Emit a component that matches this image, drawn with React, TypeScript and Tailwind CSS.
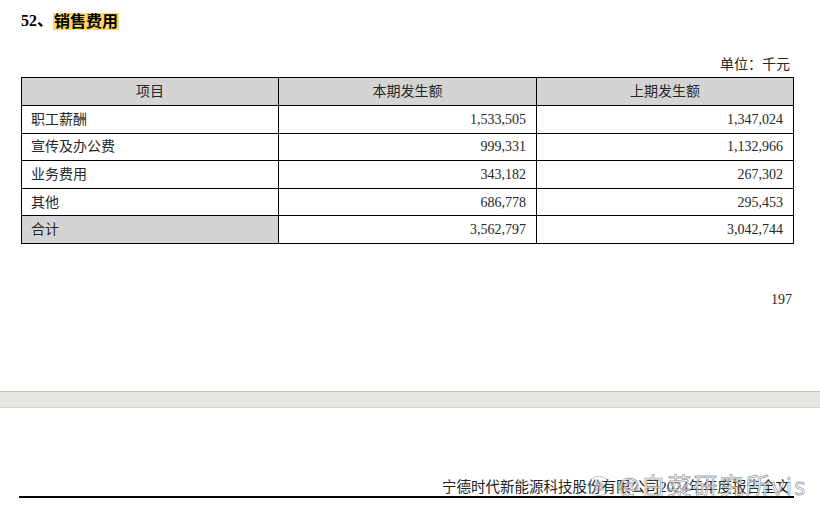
const rows = [
  { name: "职工薪酬", cur: "1,533,505", prev: "1,347,024" },
  { name: "宣传及办公费", cur: "999,331", prev: "1,132,966" },
  { name: "业务费用", cur: "343,182", prev: "267,302" },
  { name: "其他", cur: "686,778", prev: "295,453" },
];

const serif = "font-['Liberation_Serif','Noto_Sans_CJK_SC',serif]";

export default function App() {
  return (
    <div className={`w-[820px] h-[506px] overflow-hidden bg-white text-[#262626] ${serif}`}>
      {/* page top */}
      <div className="h-[391px] pl-[21px] pr-[27px] pt-[9px]">
        <h2 className="flex items-center h-[24px] text-[16px] font-bold text-black">
          <span>52、</span>
          <span className="bg-[#ffd666] leading-[17px] px-[1px]">销售费用</span>
        </h2>

        <div className="mt-[22px] pr-[3px] text-right text-[14px] leading-[20px]">单位：千元</div>

        <table className="mt-[2px] w-[772px] table-fixed border-collapse text-[14px]">
          <colgroup>
            <col className="w-[257px]" />
            <col className="w-[258px]" />
            <col className="w-[257px]" />
          </colgroup>
          <thead>
            <tr className="bg-[#d4d4d4] h-[28px]">
              <th className="border border-black font-normal text-center">项目</th>
              <th className="border border-black font-normal text-center">本期发生额</th>
              <th className="border border-black font-normal text-center">上期发生额</th>
            </tr>
          </thead>
          <tbody>
            {rows.map((r) => (
              <tr key={r.name} className="h-[27.6px]">
                <td className="border border-black pl-[9px]">{r.name}</td>
                <td className="border border-black pr-[10px] text-right">{r.cur}</td>
                <td className="border border-black pr-[10px] text-right">{r.prev}</td>
              </tr>
            ))}
            <tr className="h-[27.6px]">
              <td className="border border-black pl-[9px] bg-[#d4d4d4]">合计</td>
              <td className="border border-black pr-[10px] text-right">3,562,797</td>
              <td className="border border-black pr-[10px] text-right">3,042,744</td>
            </tr>
          </tbody>
        </table>

        <div className="mt-[48px] pr-[1px] text-right text-[14px] leading-[16px]">197</div>
      </div>

      {/* gap between pages */}
      <div className="h-[17px] border-t border-t-[#c2c4bc] border-b border-b-[#d2d3cc] bg-[#e4e6df]" />

      {/* next page header */}
      <div className="relative h-[98px]">
        <div className="absolute right-[30px] top-[70px] whitespace-nowrap text-[14.5px] leading-[18px] text-[#222]">
          宁德时代新能源科技股份有限公司2024年年度报告全文
        </div>
        {/* watermark */}
        <div className="absolute left-[588px] top-[66px] flex items-center gap-[8px] whitespace-nowrap text-[24px] leading-[24px] tracking-[2px] font-['Noto_Sans','Noto_Sans_CJK_SC',sans-serif] text-white/80 [-webkit-text-stroke:0.8px_rgba(110,110,110,0.65)]">
          <span className="flex h-[20px] w-[22px] items-center justify-center rounded-full border-[1.5px] border-[#999]/60 text-[10px] tracking-normal [-webkit-text-stroke:0.4px_rgba(110,110,110,0.6)]">微</span>
          <span>@白菜研究所vis</span>
        </div>
        <div className="absolute left-[19px] right-[26px] top-[88px] h-[2px] bg-black" />
      </div>
    </div>
  );
}
